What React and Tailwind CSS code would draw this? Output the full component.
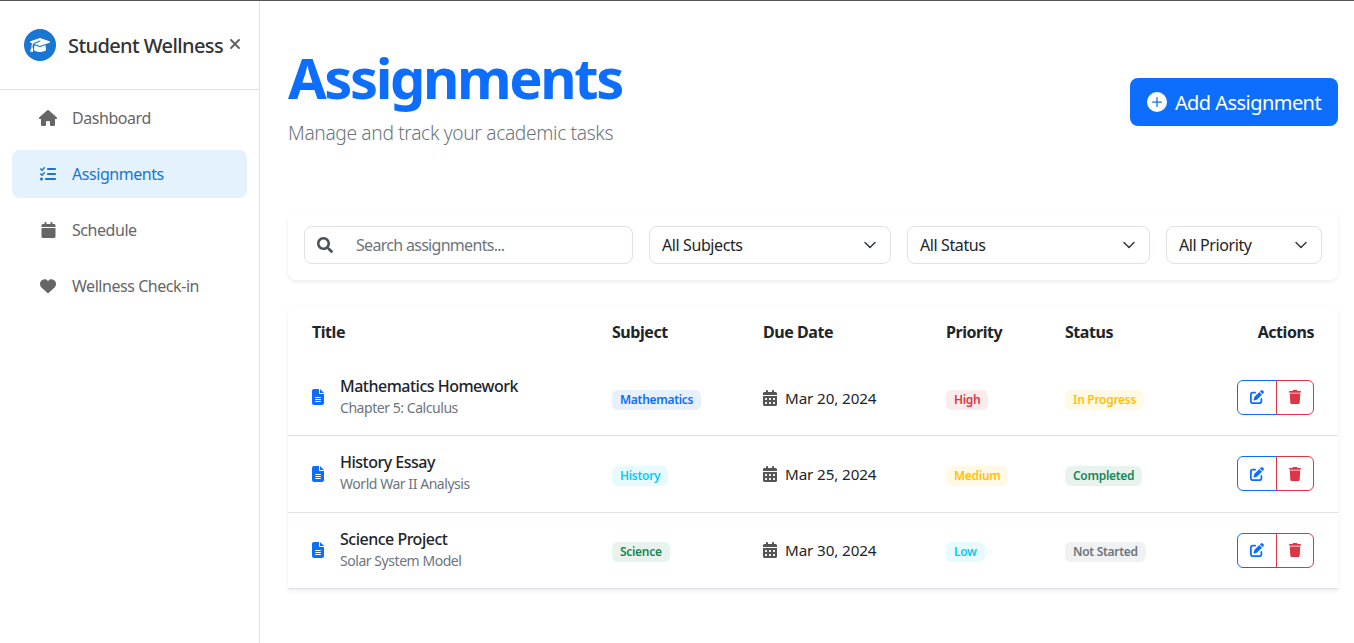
import React from "react";
import { FaGraduationCap, FaHouse, FaListCheck, FaCalendar, FaHeart, FaFileLines, FaCalendarDays, FaPenToSquare, FaTrash, FaXmark } from "react-icons/fa6";
import { FaSearch } from "react-icons/fa";
import { BsPlusCircleFill } from "react-icons/bs";

const nav = [
  { label: "Dashboard", Icon: FaHouse, size: "h-4 w-[18px]" },
  { label: "Assignments", Icon: FaListCheck, active: true, size: "size-4" },
  { label: "Schedule", Icon: FaCalendar, size: "h-4 w-[15px]" },
  { label: "Wellness Check-in", Icon: FaHeart, size: "size-4" },
];

const tones = {
  blue: "bg-[#e7f0ff] text-[#0d6efd]",
  cyan: "bg-[#e7fafe] text-[#0dcaf0]",
  green: "bg-[#e8f3ee] text-[#198754]",
  red: "bg-[#fcebec] text-[#dc3545]",
  yellow: "bg-[#fff9e6] text-[#ffc107]",
  gray: "bg-[#f0f1f2] text-[#6c757d]",
};

const rows = [
  { title: "Mathematics Homework", sub: "Chapter 5: Calculus", subject: ["Mathematics", "blue"], due: "Mar 20, 2024", priority: ["High", "red"], status: ["In Progress", "yellow"], h: "h-[75px]", badgePad: "pt-0.5", datePad: "pt-0.5", textPad: "pb-0.5" },
  { title: "History Essay", sub: "World War II Analysis", subject: ["History", "cyan"], due: "Mar 25, 2024", priority: ["Medium", "yellow"], status: ["Completed", "green"], h: "h-[77px]", badgePad: "", datePad: "pt-0.5", textPad: "pb-1" },
  { title: "Science Project", sub: "Solar System Model", subject: ["Science", "green"], due: "Mar 30, 2024", priority: ["Low", "cyan"], status: ["Not Started", "gray"], h: "h-[76px]", badgePad: "", datePad: "", textPad: "pb-0.5" },
];

function Badge({ item }) {
  return (
    <span className={`inline-block rounded-md px-2 py-[3px] text-xs leading-[14px] font-semibold tracking-[-0.3px] ${tones[item[1]]}`}>{item[0]}</span>
  );
}

function Select({ label }) {
  return (
    <button className="flex h-[38px] items-center justify-between rounded-lg border border-[#dee2e6] bg-white pl-3 pr-3 text-base text-[#212529] tracking-[-0.4px]">
      <span>{label}</span>
      <svg viewBox="0 0 16 16" className="size-4" fill="none" stroke="#343a40" strokeWidth="1.5" strokeLinecap="round" strokeLinejoin="round">
        <path d="M3 5.5 8 10.5 13 5.5" />
      </svg>
    </button>
  );
}

export default function App() {
  return (
    <div className="flex h-[643px] w-[1354px] overflow-hidden border-t border-[#555] bg-white font-['Noto_Sans','Open_Sans',sans-serif]">
      <aside className="w-[260px] shrink-0 border-r border-[#dee2e6]">
        <div className="flex h-[89px] items-center border-b border-[#e0e0e0] pl-6 pr-4">
          <span className="flex size-8 items-center justify-center rounded-full bg-[#1976d2] text-white">
            <FaGraduationCap className="h-4 w-5" />
          </span>
          <span className="ml-3 translate-y-px text-xl font-medium tracking-[-0.6px] text-[#333] whitespace-nowrap">Student Wellness</span>
          <FaXmark className="ml-auto -translate-y-px text-[16px] text-[#666]" />
        </div>
        <nav className="flex flex-col gap-2 px-3 pt-1">
          {nav.map(({ label, Icon, active, size }) => (
            <a key={label} className={`flex h-12 items-center rounded-lg pl-[26px] text-base tracking-[-0.45px] ${active ? "bg-[#e3f2fd] text-[#1976d2]" : "text-[#666]"}`}>
              <span className="flex w-5 justify-center"><Icon className={size} /></span>
              <span className="ml-[14px]">{label}</span>
            </a>
          ))}
        </nav>
      </aside>
      <main className="min-w-0 flex-1 pl-7 pr-4">
        <div className="flex h-[211px] items-start justify-between">
          <div className="pt-[43px]">
            <h1 className="text-[56px] leading-[67px] font-bold tracking-[-2.4px] text-[#0d6efd]">Assignments</h1>
            <p className="mt-2 text-[19.2px] leading-[27px] font-light tracking-[-0.35px] text-[#6c757d]">Manage and track your academic tasks</p>
          </div>
          <button className="mt-[77px] flex h-12 w-[208px] items-center justify-center gap-2 rounded-lg bg-[#0d6efd] text-xl tracking-[-0.55px] text-white">
            <BsPlusCircleFill className="text-[20px]" />
            <span className="translate-y-px">Add Assignment</span>
          </button>
        </div>
        <div className="grid h-[68px] grid-cols-[329fr_242fr_243fr_156fr] items-start gap-4 rounded-lg bg-white px-4 pt-[14px] shadow-[0_2px_4px_rgba(0,0,0,0.075)]">
          <label className="flex h-[38px] items-center rounded-lg border border-[#dee2e6] pl-3">
            <FaSearch className="text-[16px] text-[#495057]" />
            <input className="ml-[23px] min-w-0 flex-1 bg-transparent text-base tracking-[-0.7px] outline-none placeholder:text-[#6c757d]" placeholder="Search assignments..." />
          </label>
          <Select label="All Subjects" />
          <Select label="All Status" />
          <Select label="All Priority" />
        </div>
        <div className="mt-[25px] overflow-hidden rounded-t-lg bg-white shadow-[0_2px_4px_rgba(0,0,0,0.075)]">
          <table className="w-full table-fixed border-collapse text-left">
            <colgroup>
              <col className="w-[300px]" />
              <col className="w-[151px]" />
              <col className="w-[183px]" />
              <col className="w-[119px]" />
              <col />
            </colgroup>
            <thead>
              <tr className="h-[55px] text-base font-bold text-[#212529]">
                <th className="pb-px pl-6 tracking-[-0.45px]">Title</th>
                <th className="pb-px pl-6 tracking-[-0.45px]">Subject</th>
                <th className="pb-px pl-6 tracking-[-0.45px]">Due Date</th>
                <th className="pb-px pl-6 tracking-[-0.45px]">Priority</th>
                <th className="pb-px pl-6 tracking-[-0.45px]">Status</th>
                <th className="pb-px pr-6 text-right tracking-[-0.45px]">Actions</th>
              </tr>
            </thead>
            <tbody>
              {rows.map((r) => (
                <tr key={r.title} className={`${r.h} border-b border-[#dee2e6]`}>
                  <td className="pl-6">
                    <div className="flex items-center">
                      <FaFileLines className="h-4 w-3 text-[#0d6efd]" />
                      <div className={`ml-4 ${r.textPad}`}>
                        <div className="text-base leading-6 font-medium tracking-[-0.5px] text-[#212529]">{r.title}</div>
                        <div className="text-sm leading-[20px] tracking-[-0.45px] text-[#6c757d]">{r.sub}</div>
                      </div>
                    </div>
                  </td>
                  <td className="pl-6"><div className={r.badgePad}><Badge item={r.subject} /></div></td>
                  <td className="pl-6">
                    <div className={`flex items-center text-[#212529] ${r.datePad}`}>
                      <FaCalendarDays className="h-4 w-3.5 text-[#555]" />
                      <span className="ml-2 text-[15.2px] tracking-[-0.1px]">{r.due}</span>
                    </div>
                  </td>
                  <td className="pl-6"><div className={r.badgePad}><Badge item={r.priority} /></div></td>
                  <td className="pl-6"><div className={r.badgePad}><Badge item={r.status} /></div></td>
                  <td className="pr-6">
                    <div className="flex justify-end">
                      <button className="flex h-[35px] w-10 items-center justify-center rounded-l-md border border-[#0d6efd] text-[#0d6efd]"><FaPenToSquare className="text-[14px]" /></button>
                      <button className="-ml-px flex h-[35px] w-[38px] items-center justify-center rounded-r-md border border-[#dc3545] text-[#dc3545]"><FaTrash className="text-[14px]" /></button>
                    </div>
                  </td>
                </tr>
              ))}
            </tbody>
          </table>
        </div>
      </main>
    </div>
  );
}
